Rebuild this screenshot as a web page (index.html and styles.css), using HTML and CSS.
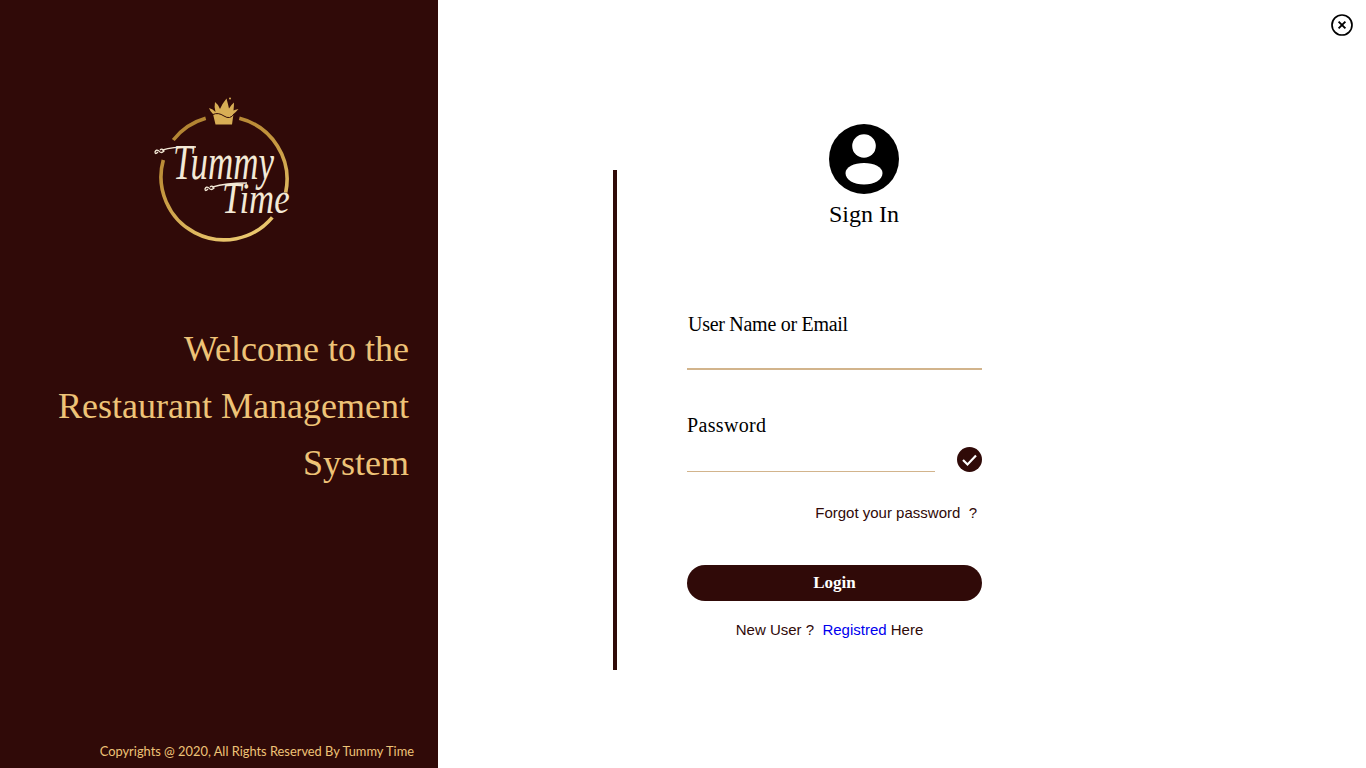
FILE: index.html
```html
<!DOCTYPE html>
<html lang="en">
<head>
    <meta charset="UTF-8">
    <meta name="viewport" content="width=device-width, initial-scale=1.0">
    <title>Tummy Time - Sign In</title>
    <link rel="stylesheet" href="styles.css">
</head>
<body>
    <div class="page">
        <aside class="side">
            <div class="logo">
                <svg width="150" height="150" viewBox="0 0 150 150">
                    <defs>
                        <linearGradient id="gold" gradientUnits="userSpaceOnUse" x1="30" y1="0" x2="100" y2="150">
                            <stop offset="0" stop-color="#a87a2c"/>
                            <stop offset="0.45" stop-color="#c2943c"/>
                            <stop offset="1" stop-color="#efcd74"/>
                        </linearGradient>
                    </defs>
                    <path d="M23.3 44 A63 63 0 0 1 55.7 22.3" fill="none" stroke="url(#gold)" stroke-width="3.6"/>
                    <path d="M89.3 22.3 A63 63 0 0 1 135.7 96.3" fill="none" stroke="url(#gold)" stroke-width="3.6"/>
                    <path d="M122.3 121.3 A63 63 0 0 1 13.3 64" fill="none" stroke="url(#gold)" stroke-width="3.6"/>
                    <path d="M59 12 Q63 13 65.5 16 Q64 10 65 6 Q68 8 70 13 Q72 8 76.5 2.5 Q78 8 79 12.5 Q81 9 84 6.5 Q84 10 83.5 14.5 Q85 13.5 88.5 13 Q86 16 83.5 18 L82 28.5 L65.5 28.5 L63 18 Q60 15.5 59 12 Z" fill="#d8ae55"/>
                    <circle cx="80" cy="2.5" r="1" fill="#d8ae55"/>
                    <path d="M63 18.5 Q68 16 74 20 T84 18" fill="none" stroke="#300a08" stroke-width="1"/>
                    <text class="logo-top" transform="translate(23 83) scale(0.7 1)">Tummy</text>
                    <text class="logo-bottom" transform="translate(72 117) scale(0.79 1)">Time</text>
                    <path d="M8 56 q-3 3 -3 0 q1 -3 4 -1 q2 3 5 0 q-2 -3 -4 -1 M12 54 q14 -4 34 -3" fill="none" stroke="#f3e9d6" stroke-width="1.3"/>
                    <path d="M58 93 q-3 3 -3 0 q1 -3 4 -1 q2 3 5 0 q-2 -3 -4 -1 M62 91 q14 -4 35 -4" fill="none" stroke="#f3e9d6" stroke-width="1.3"/>
                </svg>
            </div>
            <h1 class="welcome">Welcome to the<br>Restaurant Management<br>System</h1>
            <p class="copy">Copyrights @ 2020, All Rights Reserved By Tummy Time</p>
        </aside>

        <main class="content">
            <div class="rule"></div>
            <div class="login">
                <div class="head">
                    <svg width="70" height="70" viewBox="0 0 70 70">
                        <circle cx="35" cy="35" r="35" fill="#000"/>
                        <circle cx="35" cy="22" r="11.8" fill="#fff"/>
                        <path d="M16.5 49 C16.5 43 25 39 35 39 C45 39 53.5 43 53.5 49 C53.5 56 45 60.5 35 60.5 C25 60.5 16.5 56 16.5 49 Z" fill="#fff"/>
                    </svg>
                    <h2>Sign In</h2>
                </div>

                <label class="lbl first" for="user">User Name or Email</label>
                <input class="inp strong" type="text" id="user">

                <label class="lbl second" for="pass">Password</label>
                <div class="pass-row">
                    <input class="inp" type="password" id="pass">
                    <span class="check">
                        <svg width="25" height="25" viewBox="0 0 25 25">
                            <path d="M6 13 L10.5 17.5 L19 8.5" fill="none" stroke="#fff" stroke-width="2.2"/>
                        </svg>
                    </span>
                </div>

                <div class="forgot">Forgot your password &nbsp;?</div>
                <button class="btn">Login</button>
                <div class="newuser">New User ? &nbsp;<a href="#">Registred</a> Here</div>
            </div>
        </main>
    </div>

    <a class="close" href="#">
        <svg width="22" height="22" viewBox="0 0 22 22">
            <circle cx="11" cy="11" r="10" fill="none" stroke="#000" stroke-width="1.7"/>
            <path d="M7.6 7.6 L14.4 14.4 M14.4 7.6 L7.6 14.4" stroke="#000" stroke-width="1.9"/>
        </svg>
    </a>
</body>
</html>
```

FILE: styles.css
```css
html, body {
    margin: 0;
    padding: 0;
    height: 100%;
    background-color: #fff;
}

.page {
    display: flex;
    height: 768px;
    overflow: hidden;
}

.side {
    width: 438px;
    height: 768px;
    flex: none;
    box-sizing: border-box;
    background-color: #300a08;
    display: flex;
    flex-direction: column;
    padding: 96px 29px 0 0;
}

.logo {
    height: 150px;
    padding-left: 150px;
}

.logo svg {
    display: block;
}

.logo-top,
.logo-bottom {
    font-family: "Liberation Serif", serif;
    font-style: italic;
    fill: #f3e9d6;
}

.logo-top {
    font-size: 50px;
}

.logo-bottom {
    font-size: 44px;
}

.welcome {
    margin: 75px 0 0 0;
    font-family: "Liberation Serif", serif;
    font-weight: normal;
    font-size: 36px;
    line-height: 57px;
    text-align: right;
    color: #eec377;
}

.copy {
    margin: auto -5px 9px 0;
    font-family: Lato, sans-serif;
    font-size: 12.85px;
    line-height: 16px;
    text-align: right;
    color: #eec377;
}

.content {
    flex: 1;
    display: flex;
    padding-left: 175px;
}

.rule {
    width: 4px;
    height: 500px;
    margin-top: 170px;
    background-color: #300a08;
}

.login {
    width: 295px;
    margin-left: 70px;
    padding-top: 124px;
}

.head {
    width: 354px;
    text-align: center;
}

.head svg {
    display: block;
    margin: 0 auto;
}

.head h2 {
    margin: 6px 0 0 0;
    font-family: "Liberation Serif", serif;
    font-weight: normal;
    font-size: 24px;
    line-height: 28px;
    color: #000;
}

.lbl {
    display: block;
    font-family: "Liberation Serif", serif;
    font-size: 20px;
    line-height: 24px;
    color: #000;
}

.lbl.first {
    margin-top: 84px;
    padding-left: 1px;
    letter-spacing: -0.28px;
}

.lbl.second {
    margin-top: 43px;
    letter-spacing: 0.35px;
}

.inp {
    display: block;
    width: 100%;
    height: 34px;
    box-sizing: border-box;
    margin: 0;
    padding: 0;
    border: none;
    border-bottom: 1px solid #d2b48c;
    outline: none;
    background: transparent;
}

.inp.strong {
    border-bottom-width: 2px;
}

.pass-row {
    display: flex;
    align-items: flex-end;
    justify-content: space-between;
}

.pass-row .inp {
    width: 248px;
    height: 35px;
}

.check {
    width: 25px;
    height: 25px;
    border-radius: 50%;
    background-color: #300a08;
}

.check svg {
    display: block;
}

.forgot {
    margin-top: 32px;
    padding-right: 5px;
    text-align: right;
    font-family: "Liberation Sans", sans-serif;
    font-size: 15px;
    line-height: 18px;
    color: #300a08;
}

.btn {
    display: block;
    width: 100%;
    height: 36px;
    margin-top: 43px;
    border: none;
    border-radius: 18px;
    background-color: #300a08;
    color: #fff;
    font-family: "Liberation Serif", serif;
    font-weight: bold;
    font-size: 17px;
    cursor: pointer;
}

.newuser {
    margin-top: 20px;
    width: 285px;
    text-align: center;
    font-family: "Liberation Sans", sans-serif;
    font-size: 15px;
    line-height: 18px;
    color: #300a08;
}

.newuser a {
    color: #0000ee;
    text-decoration: none;
}

.close {
    position: absolute;
    top: 14px;
    right: 13px;
    line-height: 0;
}
```
